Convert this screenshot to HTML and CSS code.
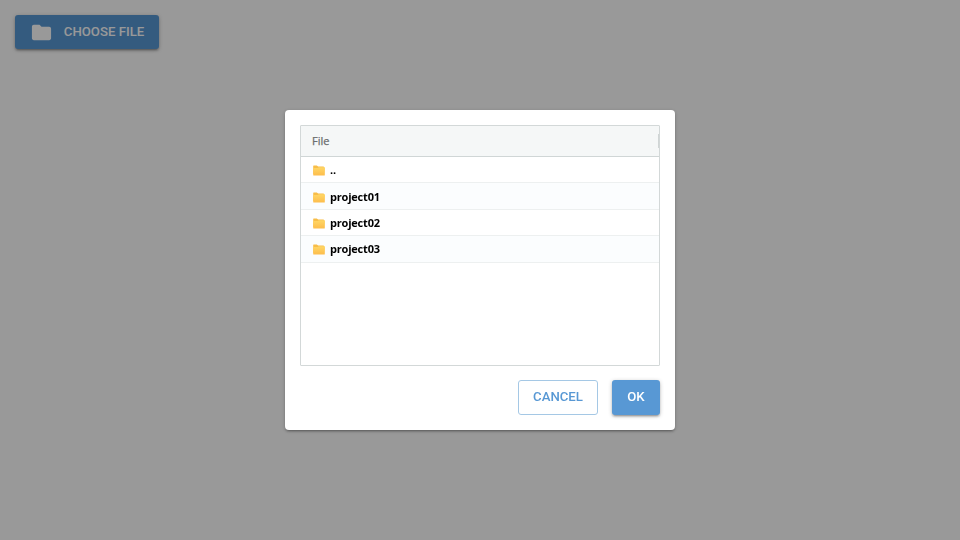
FILE: index.html
```html
<!DOCTYPE html>
<html lang="en">
<head>
<meta charset="utf-8">
<title>Choose file</title>
<link rel="stylesheet" href="styles.css">
</head>
<body>
<svg class="defs" width="0" height="0" aria-hidden="true">
  <defs>
    <linearGradient id="fold" x1="0" y1="0" x2="0" y2="1"><stop offset="0" stop-color="#ffd766"/><stop offset="1" stop-color="#fdbd4c"/></linearGradient>
    <symbol id="folder" viewBox="0 0 12 11"><path fill="#f8bd48" d="M.7.4h3.100l1.300 1.100h5.300q.6 0 .6.600V9H.2V.9Q.2.400.7.400z"/><path fill="url(#fold)" d="M.2 3h4.600l1.100-.8H12l-.2 7.700q0 .6-.6.600H.8Q.2 10.500.2 10z"/></symbol>
  </defs>
</svg>
<main>
  <button class="btn primary choose">
    <svg class="choose-icon" viewBox="0 0 24 24"><path fill="currentColor" d="M10 4H4c-1.100 0-2 .9-2 2v12c0 1.100.9 2 2 2h16c1.100 0 2-.9 2-2V8c0-1.100-.9-2-2-2h-8z"/></svg>
    <span>CHOOSE FILE</span>
  </button>
</main>
<div class="backdrop">
  <section class="dialog" role="dialog">
    <div class="grid">
      <div class="head"><span>File</span><i class="resize"></i></div>
      <div class="row"><svg><use href="#folder"/></svg><b>..</b></div>
      <div class="row odd"><svg><use href="#folder"/></svg><b>project01</b></div>
      <div class="row"><svg><use href="#folder"/></svg><b>project02</b></div>
      <div class="row odd"><svg><use href="#folder"/></svg><b>project03</b></div>
    </div>
    <div class="actions">
      <button class="btn outline">CANCEL</button>
      <button class="btn primary ok">OK</button>
    </div>
  </section>
</div>
</body>
</html>
```

FILE: styles.css
```css
* { box-sizing: border-box; }
body { margin: 0; height: 540px; background: #fff; font-family: Roboto, sans-serif; overflow: hidden; }
.defs { position: absolute; }
main { padding: 15px; }
.btn { display: flex; align-items: center; justify-content: center; height: 34px; padding: 0; border: 0; border-radius: 3px; font: 500 13.200px/20px Roboto, sans-serif; }
.primary { background: #5898d4; color: #fff; box-shadow: 0 1px 4px rgba(0,0,0,.22), 0 2px 2px rgba(0,0,0,.16), 0 3px 1px -2px rgba(0,0,0,.14); }
.choose { width: 144px; gap: 11px; }
.choose-icon { width: 23px; height: 23px; }
.backdrop { position: fixed; inset: 0; display: flex; align-items: center; justify-content: center; background: rgba(0,0,0,.4); }
.dialog { width: 390px; height: 320px; padding: 15px; background: #fff; border-radius: 4px; display: flex; flex-direction: column; gap: 14px; box-shadow: 0 1px 4px rgba(0,0,0,.2), 0 2px 2px rgba(0,0,0,.14), 0 3px 1px -2px rgba(0,0,0,.12); }
.grid { flex: none; height: 241px; border: 1px solid #d3d8d8; border-radius: 1px; font: 11px/16px "Open Sans", sans-serif; color: #000; }
.head { height: 31px; padding-left: 11px; display: flex; align-items: center; justify-content: space-between; background: #f5f7f7; border-bottom: 1px solid #d0d6d6; color: #6b6e6e; -webkit-text-stroke: .25px #6b6e6e; }
.resize { width: 1px; height: 14px; background: #d0d5d5; }
.row { height: 26.400px; padding-left: 12px; display: flex; align-items: center; gap: 5px; border-bottom: 1px solid #edf0f0; letter-spacing: -.2px; }
.row svg { width: 12px; height: 11px; margin-top: 2px; }
.row b { padding-top: 1px; }
.odd { background: #fbfdfe; }
.actions { display: flex; justify-content: flex-end; gap: 14px; }
.actions .btn { height: 35px; padding-bottom: 1px; }
.outline { width: 80px; background: #fff; color: #5898d4; border: 1px solid #a5c8e5; }
.ok { width: 48px; }
```
